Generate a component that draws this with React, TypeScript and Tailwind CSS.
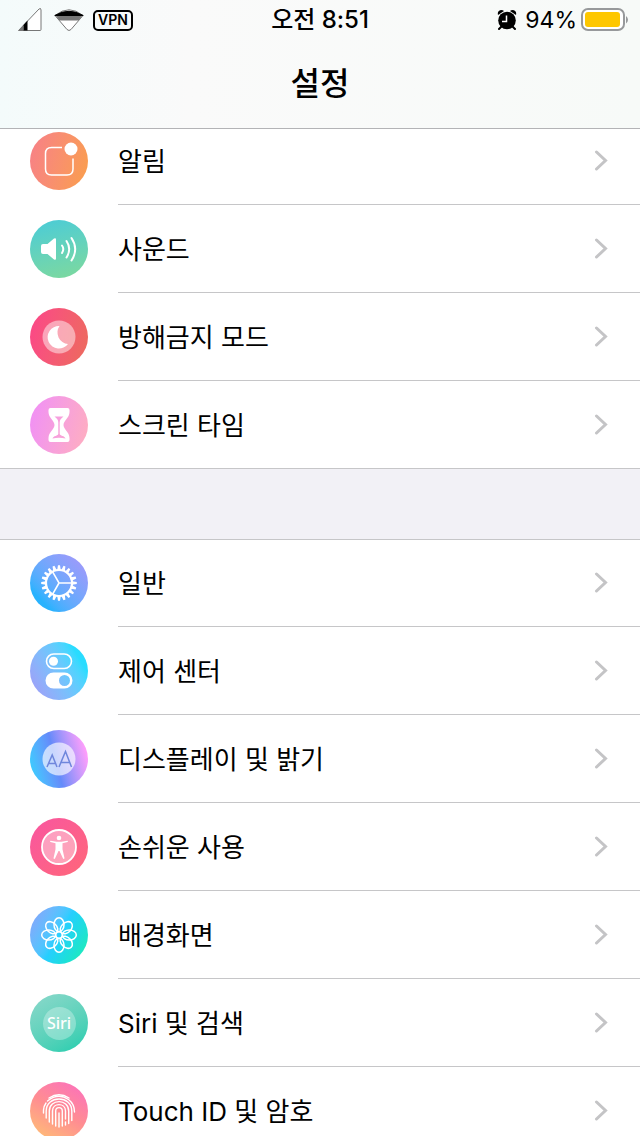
import type { ReactNode } from 'react';

type SettingItem = {
  label: string;
  bg: string;
  icon: ReactNode;
};

function SoundIcon() {
  return (
    <svg viewBox="0 0 58 58" className="size-full" fill="none" stroke="#fff" strokeWidth="2" strokeLinecap="round">
      <path d="M13 24h4.500l6.500-5.500q2-1 2 1v19q0 2-2 1L17.500 34H13q-2 0-2-2v-6q0-2 2-2z" fill="#fff" stroke="none" />
      <path d="M32 25.500q2.600 3.500 0 7.500" />
      <path d="M36.500 21q5.400 8 0 16.500" />
      <path d="M41.500 18q7.400 11 0 22.500" />
    </svg>
  );
}

function NotificationIcon() {
  return (
    <svg viewBox="0 0 58 58" className="size-full" fill="none" stroke="#fff" strokeWidth="1.5">
      <path d="M32 15.500H21.500q-6 0-6 6V37q0 6 6 6H37q6 0 6-6V26.500" />
      <circle cx="41" cy="17" r="6.500" fill="#fff" stroke="none" />
    </svg>
  );
}

function MoonIcon() {
  return (
    <svg viewBox="0 0 58 58" className="size-full">
      <circle cx="29" cy="29" r="16.500" fill="#fff" fillOpacity=".48" />
      <path d="M29.500 18A11.300 11.300 0 1 0 38 36A11.500 11.500 0 0 1 29.500 18z" fill="#fff" />
    </svg>
  );
}

function HourglassIcon() {
  return (
    <svg viewBox="0 0 58 58" className="size-full" fill="#fff">
      <path
        fillRule="evenodd"
        d="M20.500 12h17q2 0 2 2v2c0 6-6 8.500-6 13s6 7 6 13v2q0 2-2 2h-17q-2 0-2-2v-2c0-6 6-8.500 6-13s-6-7-6-13v-2q0-2 2-2zM24.500 20.500c2.500 2 3.800 3.500 3.800 6v11.500c0 1.500-5.300 2-5.800 4.500q6.500-1.500 13 0c-.5-2.500-5.800-3-5.800-4.500v-11.500c0-2.500 1.300-4 3.800-6z"
      />
    </svg>
  );
}

function GearIcon() {
  const teeth = Array.from({ length: 20 }, (_, i) => i * 18);
  return (
    <svg viewBox="0 0 58 58" className="size-full" fill="none" stroke="#fff" strokeWidth="2">
      <circle cx="29" cy="29" r="13" strokeWidth="2.2" />
      {teeth.map((angle) => (
        <path key={angle} d="M42 27.200L46.800 28v2l-4.800.8z" fill="#fff" stroke="none" transform={`rotate(${angle} 29 29)`} />
      ))}
      <path d="M42 29H29L22.500 17.700M29 29l-6.500 11.300" strokeWidth="1.600" />
    </svg>
  );
}

function ControlIcon() {
  return (
    <svg viewBox="0 0 58 58" className="size-full" fill="#fff">
      <rect x="16.500" y="12" width="25" height="14.500" rx="7.250" fill="none" stroke="#fff" strokeWidth="1.600" />
      <circle cx="23.500" cy="19.200" r="4.500" />
      <path
        fillRule="evenodd"
        d="M23.500 30.500h11a7.900 7.900 0 0 1 0 16h-11a7.900 7.900 0 0 1 0-16zM34.500 33a5.500 5.500 0 1 0 0 11a5.500 5.500 0 0 0 0-11z"
      />
    </svg>
  );
}

function DisplayIcon() {
  return (
    <svg viewBox="0 0 58 58" className="size-full">
      <circle cx="29" cy="29" r="16.500" fill="#fff" fillOpacity=".65" />
      <g fill="none" stroke="#6f86dc" strokeWidth="1.500">
        <path d="M17 37l5.200-12L27 37M18.700 33.500h7.100" />
        <path d="M29 37l6.500-15.500L41.500 37M31 32.500h9" />
      </g>
    </svg>
  );
}

function AccessibilityIcon() {
  return (
    <svg viewBox="0 0 58 58" className="size-full" fill="#fff">
      <circle cx="29" cy="29" r="17" fillOpacity=".42" stroke="#fff" strokeWidth="1.800" />
      <circle cx="29" cy="20" r="2.300" />
      <path d="M20.500 22.700l6 1h5l6-1q1 .7 0 1.400l-5 1.200v6l2 9q-.5 1-1.500.3L29.500 33h-1L25 40.600q-1 .7-1.500-.3l2-9v-6l-5-1.200q-1-.7 0-1.400z" />
    </svg>
  );
}

function WallpaperIcon() {
  const petals = [0, 45, 90, 135, 180, 225, 270, 315];
  return (
    <svg viewBox="0 0 58 58" className="size-full" fill="none" stroke="#fff" strokeWidth="1.500">
      {petals.map((angle) => (
        <ellipse key={angle} cx="29" cy="18.700" rx="5" ry="7" transform={`rotate(${angle} 29 29)`} />
      ))}
      <circle cx="29" cy="29" r="3.300" />
    </svg>
  );
}

function SiriIcon() {
  return (
    <span className="flex size-[33px] items-center justify-center rounded-full bg-white/30 font-['Noto_Sans'] text-base font-medium text-white">
      Siri
    </span>
  );
}

function FingerprintIcon() {
  return (
    <svg viewBox="0 0 58 58" className="size-full" fill="none" stroke="#fff" strokeWidth="1.400" strokeLinecap="round">
      <path d="M19 16Q29 9.500 39 16" />
      <path d="M13.500 31V28q.3-4 2.500-7M17.500 19Q28 10.500 38.500 17.500Q44.500 22 44.500 30" />
      <path d="M16.200 36V29C16.200 13 41.800 13 41.800 29v9.500" />
      <path d="M19.300 40V29c0-12.500 19.400-12.500 19.400 0v12.500" />
      <path d="M22.500 42V29c0-8.500 13-8.500 13 0v8M35.500 40v3" />
      <path d="M25.700 44V29c0-4.500 6.600-4.500 6.600 0v15" />
      <path d="M29 31v14" />
    </svg>
  );
}

const alertItems: SettingItem[] = [
  { label: '알림', bg: 'bg-linear-105 from-[#f77f88] to-[#fa9f48]', icon: <NotificationIcon /> },
  { label: '사운드', bg: 'bg-linear-165 from-[#48cbd8] to-[#7ed99b]', icon: <SoundIcon /> },
  { label: '방해금지 모드', bg: 'bg-linear-105 from-[#fc4489] to-[#ec6b5b]', icon: <MoonIcon /> },
  { label: '스크린 타임', bg: 'bg-linear-105 from-[#f08ef8] to-[#ffafbd]', icon: <HourglassIcon /> },
];

const generalItems: SettingItem[] = [
  { label: '일반', bg: 'bg-linear-45 from-[#28b2fe] from-20% to-[#a795fa]', icon: <GearIcon /> },
  { label: '제어 센터', bg: 'bg-linear-60 from-[#9ca1f8] from-10% to-[#29dcff] to-80%', icon: <ControlIcon /> },
  { label: '디스플레이 및 밝기', bg: 'bg-linear-75 from-[#22d9ff] via-[#648afa] via-45% to-[#ff9efb] to-90%', icon: <DisplayIcon /> },
  { label: '손쉬운 사용', bg: 'bg-linear-135 from-[#f955a0] to-[#ff6778]', icon: <AccessibilityIcon /> },
  { label: '배경화면', bg: 'bg-linear-120 from-[#8b9ffa] via-[#27ceff] to-[#23f0a8]', icon: <WallpaperIcon /> },
  { label: 'Siri 및 검색', bg: 'bg-linear-150 from-[#8bd8cb] to-[#11cdae]', icon: <SiriIcon /> },
  { label: 'Touch ID 및 암호', bg: 'bg-linear-30 from-[#ffc46e] via-[#ff8d91] to-[#fb6bc0]', icon: <FingerprintIcon /> },
];

function StatusBar() {
  return (
    <div className="grid h-10 grid-cols-[1fr_auto_1fr] items-center px-[11px]">
      <div className="flex items-center pl-[7px]">
        <svg viewBox="0 0 24 24" className="size-6">
          <path d="M.500 22.500L21 1q2-1.500 2 1v19.500q0 1-1 1z" fill="#fff" stroke="#777" />
          <path d="M.500 22.500L5.500 17v5.500z" fill="#777" />
          <path d="M5.500 17L9.500 12.500v10h-4z" fill="#000" />
        </svg>
        <svg viewBox="0 0 30 24" className="ml-3 h-6 w-[30px]">
          <path d="M1 7.500L13 21.500q2 2 4 0L29 7.500Q15-4 1 7.500z" fill="#fff" stroke="#777" />
          <path d="M1.500 7.500h27L24.500 12.500h-19z" fill="#777" />
          <path d="M.800 7.500Q15-1 29.200 7.500z" fill="#000" stroke="#000" />
        </svg>
        <span className="ml-[9px] flex h-[21px] w-10 items-center justify-center rounded-[5px] border-2 border-black text-sm font-semibold">
          VPN
        </span>
      </div>
      <time className="text-2xl font-medium">오전 8:51</time>
      <div className="flex items-center justify-end">
        <svg viewBox="0 0 20 22" className="h-[22px] w-5">
          <circle cx="10" cy="11.500" r="8.800" />
          <path d="M1 6Q0 2 4 1q2 0 3 1zM19 6q1-4-3-5-2 0-3 1z" />
          <path d="M4.500 17.500L2 20M15.500 17.500L18 20" stroke="#000" strokeWidth="2" strokeLinecap="round" />
          <path d="M9.500 6.500v6H5" fill="none" stroke="#fff" strokeWidth="1.500" />
        </svg>
        <span className="ml-2 text-[23px]">94%</span>
        <svg viewBox="0 0 48 24" className="ml-1 h-6 w-12">
          <rect x="1" y="1" width="42" height="21" rx="6" fill="#fff" stroke="#97999b" strokeWidth="2" />
          <rect x="4" y="4" width="35" height="15" rx="3" fill="#fec700" />
          <path d="M45 8q4 3.500 0 7.500z" fill="#97999b" />
        </svg>
      </div>
    </div>
  );
}

function SettingList({ items }: { items: SettingItem[] }) {
  return (
    <ul className="shadow-[inset_0_1px_0_#c6c6c8]">
      {items.map((item) => (
        <li key={item.label} className="group">
          <a href="#" className="flex h-[88px] items-center pl-[30px] group-last:border-b group-last:border-[#c6c6c8]">
            <span className={`flex size-[58px] shrink-0 items-center justify-center rounded-full ${item.bg}`}>{item.icon}</span>
            <span className="ml-[30px] flex h-full flex-1 items-center justify-between border-b border-[#c6c6c8] pr-8 group-last:border-b-0">
              <span className="pt-0.5">{item.label}</span>
              <svg viewBox="0 0 14 22" className="h-[22px] w-3.5" fill="none" stroke="#c4c4c6" strokeWidth="3" strokeLinecap="round">
                <path d="M2.500 2L11.500 10.500l-9 8.500" />
              </svg>
            </span>
          </a>
        </li>
      ))}
    </ul>
  );
}

export default function App() {
  return (
    <div className="flex h-screen flex-col overflow-hidden bg-white font-[Inter,'Noto_Sans_CJK_KR',sans-serif] text-black">
      <header className="h-[129px] shrink-0 border-b border-[#b3b3b6] bg-linear-to-r from-[#f4fbfb] via-[#fafafa] via-30% to-[#f7faf8]">
        <StatusBar />
        <h1 className="flex h-[88px] items-center justify-center text-[32px] font-medium">설정</h1>
      </header>
      <main className="min-h-0 flex-1 overflow-hidden text-[26px]">
        <div className="-mt-3">
          <SettingList items={alertItems} />
          <div className="h-[70px] bg-[#f2f1f6]" />
          <SettingList items={generalItems} />
        </div>
      </main>
    </div>
  );
}
